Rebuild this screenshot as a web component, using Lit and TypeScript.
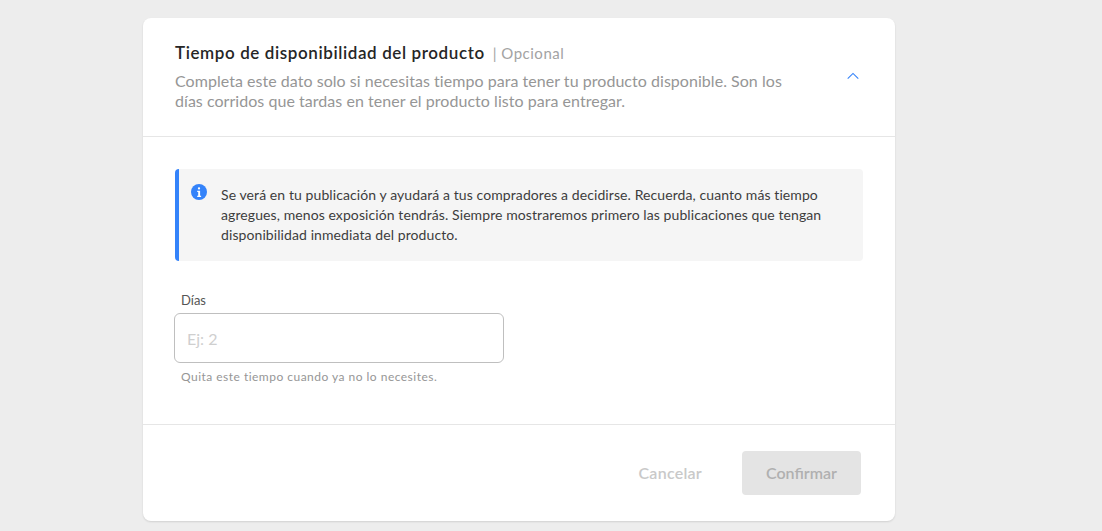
import { LitElement, html, css } from "lit";
import { customElement } from "lit/decorators.js";

@customElement("app-root")
export class AppRoot extends LitElement {
  static styles = css`
    :host { display: block; height: 531px; overflow: hidden; background: #ededed; font-family: "Lato", "Liberation Sans", sans-serif; color: #333; }
    .page { display: flex; justify-content: flex-start; padding: 18px 0 0 143px; }
    .card { width: 752px; height: 503px; box-sizing: border-box; background: #fff; border-radius: 8px; box-shadow: 0 1px 2px rgba(0,0,0,.12); display: flex; flex-direction: column; }
    .head { height: 119px; box-sizing: border-box; padding: 25px 36px 0 32px; border-bottom: 1px solid #e6e6e6; display: flex; justify-content: space-between; align-items: flex-start; }
    .head-text { width: 625px; }
    .title { display: flex; align-items: baseline; gap: 8px; line-height: 20px; }
    .title b { font-size: 17px; font-weight: 600; color: #262626; letter-spacing: .6px; }
    .title span { font-size: 15px; color: #a3a3a3; letter-spacing: .5px; }
    .desc { margin: 8px 0 0; font-size: 16px; line-height: 20px; color: #969696; letter-spacing: .04px; }
    .chev { margin-top: 29px; display: block; }
    .body { height: 288px; box-sizing: border-box; padding: 32px 32px 0; border-bottom: 1px solid #e6e6e6; }
    .alert { height: 92px; box-sizing: border-box; background: #f5f5f5; border-left: 4px solid #3483fa; border-radius: 4px; display: flex; padding: 16px 16px 0 12px; gap: 14px; }
    .alert svg { flex: none; margin-top: -1px; }
    .alert p { margin: 0; font-size: 14px; line-height: 20px; color: #3d3d3d; letter-spacing: .09px; }
    .field { width: 330px; margin: 31px 0 0 -1px; }
    .label { display: block; padding-left: 7px; font-size: 13px; line-height: 16px; color: #555; }
    .input { margin-top: 5px; height: 50px; box-sizing: border-box; border: 1px solid #bfbfbf; border-radius: 6px; display: flex; align-items: center; padding-left: 12px; font-size: 16px; color: #cfcfcf; }
    .hint { display: block; margin-top: 7px; padding-left: 7px; font-size: 12px; line-height: 14px; color: #969696; letter-spacing: .48px; }
    .foot { flex: 1; display: flex; justify-content: flex-end; align-items: flex-start; padding: 26px 34px 0 0; gap: 40px; }
    .cancel { line-height: 43px; font-size: 16px; font-weight: 600; color: #c9c9c9; letter-spacing: .25px; }
    .confirm { width: 119px; height: 44px; padding-bottom: 1px; box-sizing: border-box; border-radius: 4px; background: #e4e4e4; color: #b0b0b0; font-size: 16px; font-weight: 600; display: flex; align-items: center; justify-content: center; }
  `;
  render() {
    return html`<div class="page"><div class="card">
      <div class="head">
        <div class="head-text">
          <div class="title"><b>Tiempo de disponibilidad del producto</b><span>| Opcional</span></div>
          <p class="desc">Completa este dato solo si necesitas tiempo para tener tu producto disponible. Son los días corridos que tardas en tener el producto listo para entregar.</p>
        </div>
        <svg class="chev" width="12" height="8" viewBox="0 0 12 8"><path d="M.7 6.6 6 1.4l5.3 5.2" fill="none" stroke="#3483fa" stroke-width="1.1"/></svg>
      </div>
      <div class="body">
        <div class="alert">
          <svg width="16" height="16" viewBox="0 0 16 16"><circle cx="8" cy="8" r="8" fill="#3483fa"/><rect x="6.9" y="3.2" width="2.2" height="2.2" rx="1" fill="#fff"/><path d="M6.2 6.7h2.9v5h1v1.2H6.2v-1.2h1v-3.8h-1z" fill="#fff"/></svg>
          <p>Se verá en tu publicación y ayudará a tus compradores a decidirse. Recuerda, cuanto más tiempo agregues, menos exposición tendrás. Siempre mostraremos primero las publicaciones que tengan disponibilidad inmediata del producto.</p>
        </div>
        <div class="field">
          <span class="label">Días</span>
          <div class="input">Ej: 2</div>
          <span class="hint">Quita este tiempo cuando ya no lo necesites.</span>
        </div>
      </div>
      <div class="foot"><span class="cancel">Cancelar</span><div class="confirm">Confirmar</div></div>
    </div></div>`;
  }
}
